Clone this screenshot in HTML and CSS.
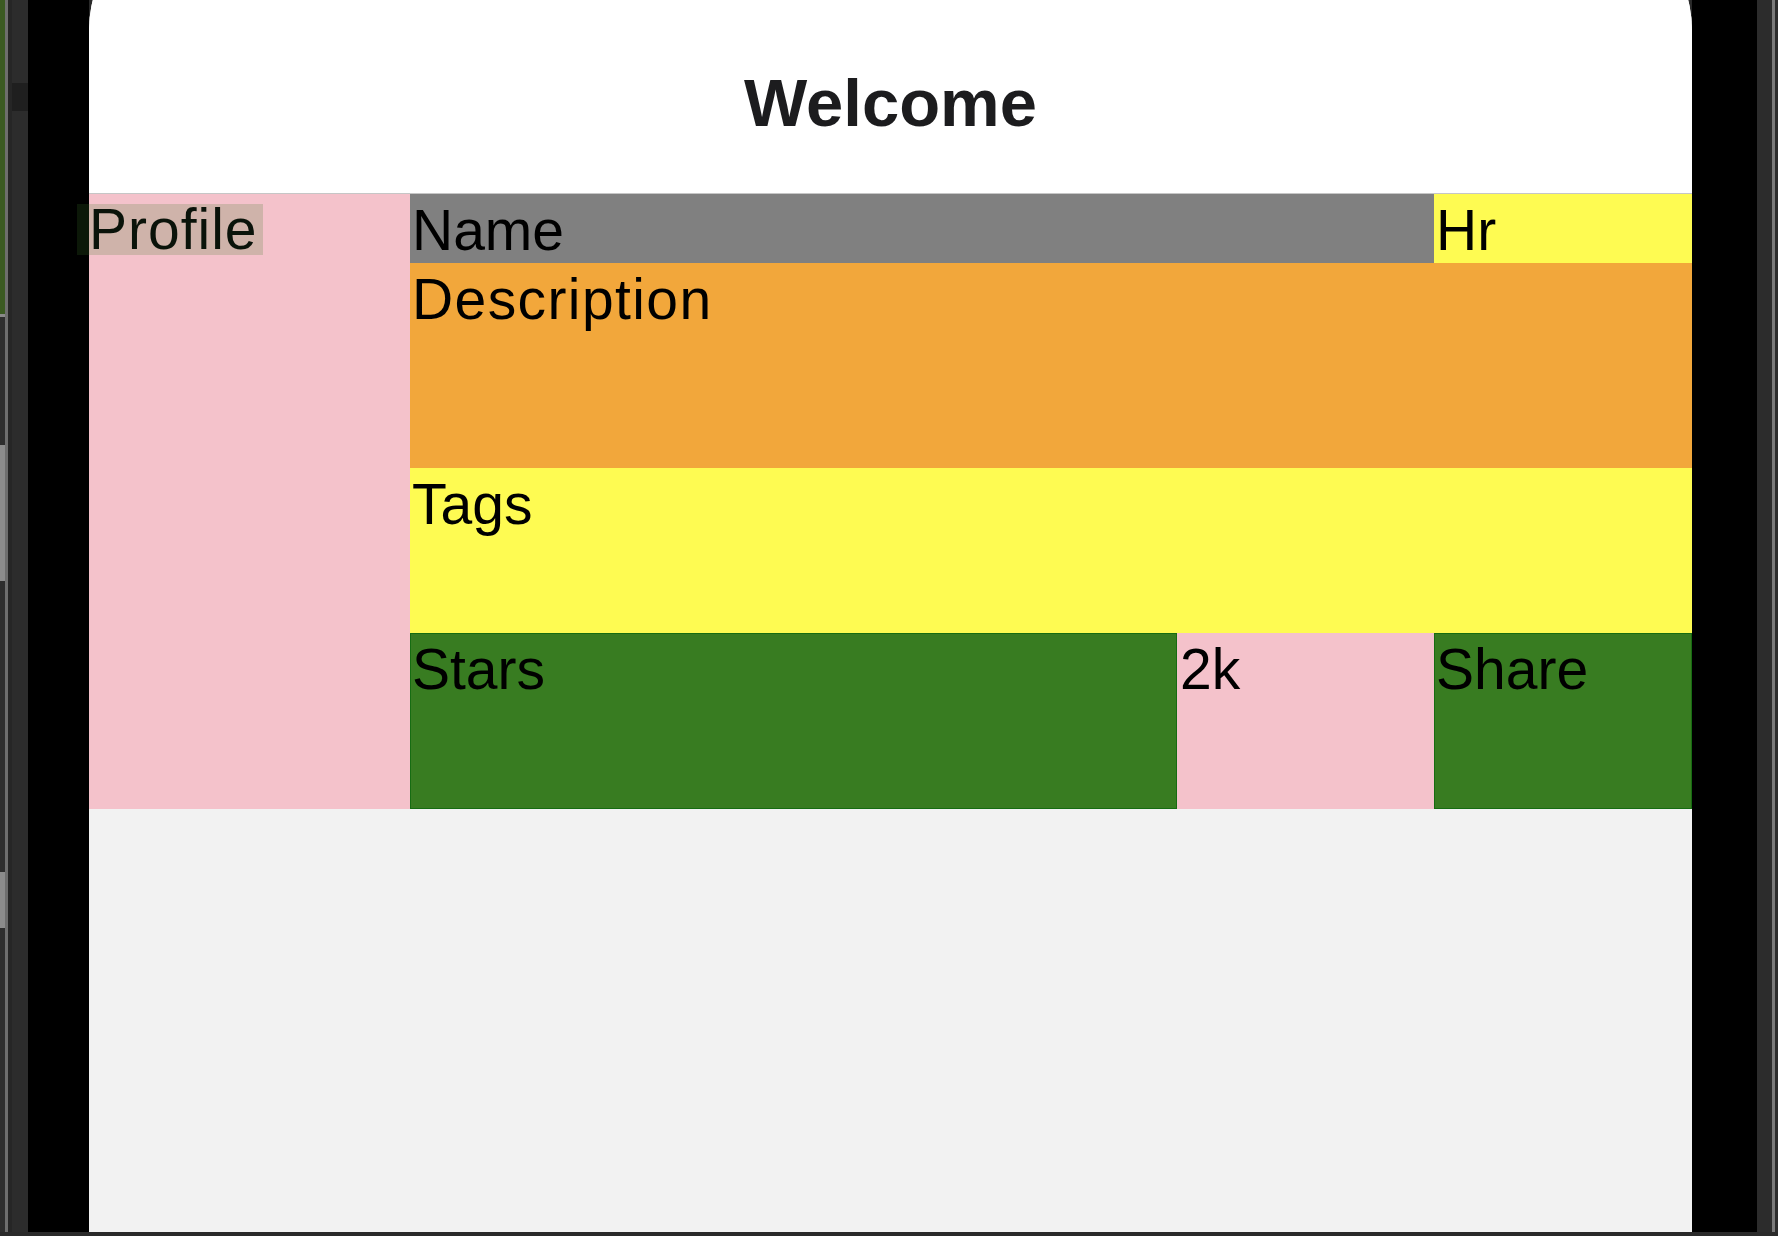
FILE: index.html
```html
<!DOCTYPE html>
<html lang="en">
<head>
<meta charset="utf-8">
<title>Welcome</title>
<link rel="stylesheet" href="styles.css">
</head>
<body>
  <div class="desk-left">
    <div class="strip-a">
      <div class="seg-green"></div>
      <div class="seg-line"></div>
      <div class="seg-dark s1"></div>
      <div class="seg-light s2"></div>
      <div class="seg-dark s3"></div>
      <div class="seg-light s4"></div>
      <div class="seg-dark s5"></div>
    </div>
    <div class="strip-b"></div>
    <div class="strip-c"></div>
    <div class="strip-d"><div class="notch"></div></div>
  </div>
  <div class="bezel bezel-l"></div>
  <main class="screen">
    <header class="navbar">
      <h1 class="title">Welcome</h1>
    </header>
    <section class="card">
      <div class="cell profile"><span class="profile-label">Profile</span></div>
      <div class="cell name">Name</div>
      <div class="cell hr">Hr</div>
      <div class="cell desc">Description</div>
      <div class="cell tags">Tags</div>
      <div class="cell stars">Stars</div>
      <div class="cell count">2k</div>
      <div class="cell share">Share</div>
    </section>
  </main>
  <div class="bezel bezel-r"></div>
  <div class="desk-right">
    <div class="r-a"></div>
    <div class="r-b"></div>
    <div class="r-c"></div>
  </div>
</body>
</html>
```
FILE: styles.css
```css
* { box-sizing: border-box; }

html, body {
  margin: 0;
  padding: 0;
}

body {
  width: 1778px;
  height: 1236px;
  overflow: hidden;
  background: #2a2a2a;
  display: flex;
  align-items: flex-start;
  font-family: "Liberation Sans", Arial, sans-serif;
}

/* desktop edge on the left */
.desk-left {
  width: 28px;
  height: 1232px;
  display: flex;
}
.strip-a {
  width: 5px;
  display: flex;
  flex-direction: column;
}
.seg-green { height: 314px; background: #3b5a22; }
.seg-line { height: 3px; background: #8a8a8a; }
.s1 { height: 128px; }
.s2 { height: 136px; }
.s3 { height: 291px; }
.s4 { height: 56px; }
.s5 { flex: 1; }
.seg-dark { background: #2e2e2e; }
.seg-light { background: #8c8c8c; }
.strip-b { width: 3px; background: #6e6e6e; }
.strip-c { width: 4px; background: #262626; }
.strip-d {
  width: 16px;
  background: #2c2c2c;
  padding-top: 83px;
}
.notch { height: 28px; background: #1f1f1f; }

.bezel {
  height: 1232px;
  background: #000;
}
.bezel-l { width: 61px; }
.bezel-r { width: 65px; }

.desk-right {
  width: 21px;
  height: 1232px;
  display: flex;
}
.r-a { width: 15px; background: #2c2c2c; }
.r-b { width: 3px; background: #7a7a7a; }
.r-c { width: 3px; background: #2c2c2c; }

/* phone screen */
.screen {
  width: 1603px;
  height: 1322px;
  margin-top: -90px;
  background: #f2f2f2;
  border-radius: 120px 120px 0 0;
  display: flex;
  flex-direction: column;
}

.navbar {
  height: 284px;
  background: #fff;
  border-radius: 120px 120px 0 0;
  border-bottom: 1px solid #c6c6c6;
  padding-top: 154px;
  display: flex;
  justify-content: center;
  align-items: flex-start;
}

.title {
  margin: 0;
  font-size: 67px;
  font-weight: 700;
  line-height: normal;
  color: #1c1c1e;
  letter-spacing: 0;
}

.card {
  display: grid;
  grid-template-columns: 321px 767px 257px 258px;
  grid-template-rows: 69px 205px 165px 176px;
}

.cell {
  font-size: 57px;
  line-height: normal;
  color: #000;
  padding: 3px 0 0 2px;
}

.profile {
  grid-column: 1;
  grid-row: 1 / 5;
  background: #f4c2cb;
  padding: 10px 0 0 0;
}
.profile-label {
  display: block;
  width: fit-content;
  height: 51px;
  line-height: 51px;
  margin-left: -12px;
  padding: 0 5px 0 12px;
  letter-spacing: 1px;
  background: rgba(60, 120, 40, 0.2);
  color: #0a130a;
}

.name {
  grid-column: 2 / 4;
  background: #808080;
}
.hr {
  grid-column: 4;
  background: #fefb52;
}
.desc {
  grid-column: 2 / 5;
  background: #f2a73b;
  letter-spacing: 1.4px;
}
.tags {
  grid-column: 2 / 5;
  background: #fefb52;
}
.stars {
  grid-column: 2;
  background: #387c21;
  border: 1px solid #166c12;
  padding: 2px 0 0 1px;
}
.count {
  grid-column: 3;
  background: #f4c2cb;
  padding-left: 3px;
}
.share {
  grid-column: 4;
  background: #387c21;
  border: 1px solid #166c12;
  padding: 2px 0 0 1px;
}
```
